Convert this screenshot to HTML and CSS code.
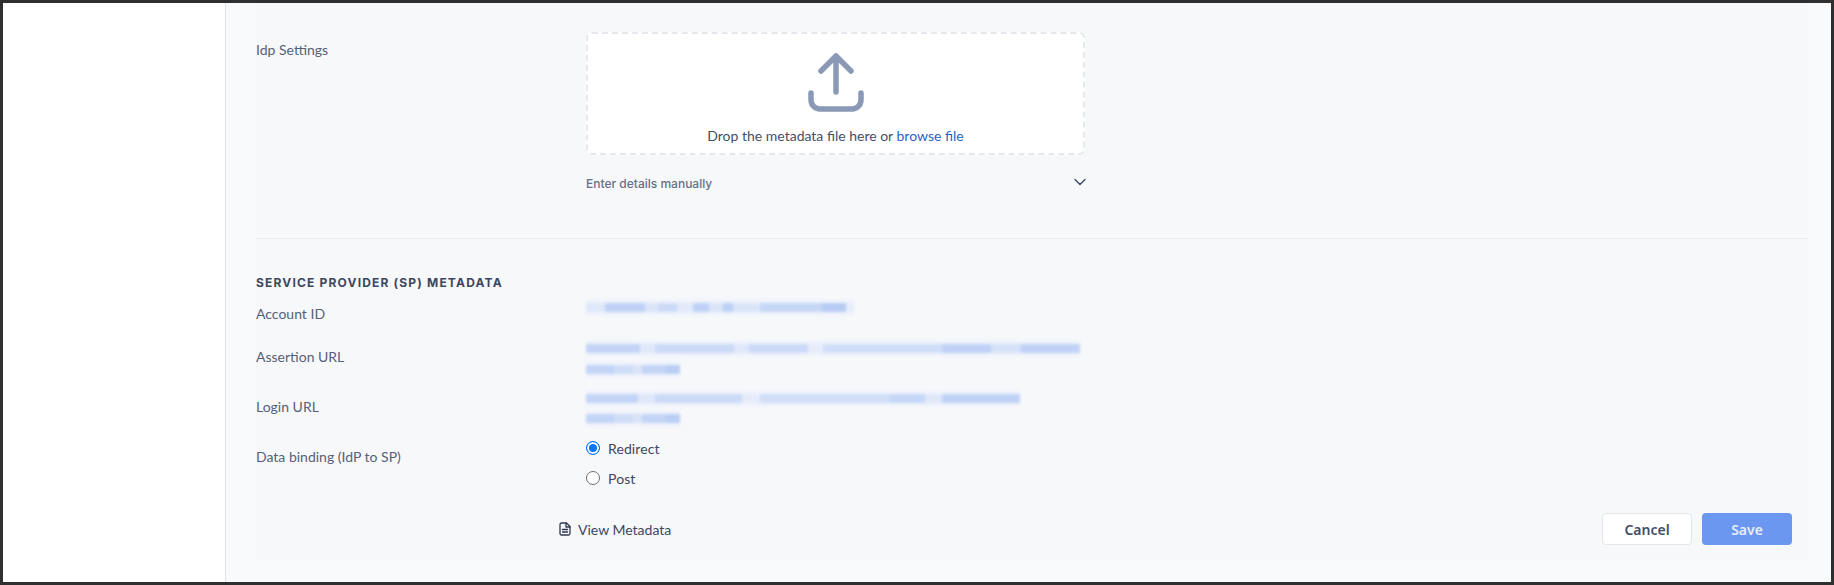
FILE: index.html
```html
<!DOCTYPE html>
<html lang="en">
<head>
<meta charset="utf-8">
<title>SAML settings</title>
<link rel="stylesheet" href="styles.css">
</head>
<body>
<div class="frame">
  <aside class="sidebar"></aside>
  <main class="main">
    <div class="card">
      <section class="idp">
        <div class="label idp-label">Idp Settings</div>
        <div class="idp-body">
          <div class="drop">
            <svg class="upload" viewBox="0 0 56 60" width="56" height="60" fill="none" stroke="#8a99b5" stroke-linecap="round" stroke-linejoin="round">
              <path stroke-width="5.500" d="M28 40V4M13 19 28 4 43 19"/>
              <path stroke-width="5.500" d="M3 41v7a9 9 0 0 0 9 9h32a9 9 0 0 0 9-9v-7"/>
            </svg>
            <p class="drop-text">Drop the metadata file here or <a class="link" href="#">browse file</a></p>
          </div>
          <div class="manual">
            <span>Enter details manually</span>
            <svg class="chev" viewBox="0 0 12 8" width="12" height="8" fill="none" stroke="#3d4760" stroke-width="1.400" stroke-linecap="round" stroke-linejoin="round"><path d="M1 1.500 6 6.500 11 1.500"/></svg>
          </div>
        </div>
      </section>
      <section class="sp">
        <h2 class="heading">SERVICE PROVIDER (SP) METADATA</h2>
        <div class="row row-account">
          <div class="label">Account ID</div>
          <div class="value"><div class="blur w-account m1"></div></div>
        </div>
        <div class="row row-assert">
          <div class="label">Assertion URL</div>
          <div class="value">
            <div class="blur w-assert m2"></div>
            <div class="blur w-short m3"></div>
          </div>
        </div>
        <div class="row row-login">
          <div class="label">Login URL</div>
          <div class="value">
            <div class="blur w-login m4"></div>
            <div class="blur w-short m3"></div>
          </div>
        </div>
        <div class="row row-binding">
          <div class="label">Data binding (IdP to SP)</div>
          <div class="radios">
            <label class="radio"><span class="dot on"></span>Redirect</label>
            <label class="radio"><span class="dot"></span>Post</label>
          </div>
        </div>
      </section>
      <footer class="foot">
        <a class="meta" href="#">
          <svg viewBox="0 0 12 14" width="12" height="14" fill="none" stroke="#2f3850" stroke-width="1.300" stroke-linejoin="round" stroke-linecap="round"><path d="M1 2.500A1.500 1.500 0 0 1 2.500 1H7.500L11 4.500V11.500A1.500 1.500 0 0 1 9.500 13H2.500A1.500 1.500 0 0 1 1 11.500Z"/><path d="M7 1V5H11M3.500 7.500H8.500M3.500 10H8.500"/></svg>
          View Metadata
        </a>
        <div class="actions">
          <button class="btn cancel" type="button">Cancel</button>
          <button class="btn save" type="button">Save</button>
        </div>
      </footer>
    </div>
  </main>
</div>
</body>
</html>
```
FILE: styles.css
```css
* { box-sizing: border-box; }
html, body { margin: 0; height: 100%; }
body { font-family: Lato, "Liberation Sans", sans-serif; font-size: 14px; color: #4f5a73; }

.frame {
  display: flex;
  width: 1834px;
  height: 585px;
  border: 3px solid #2f2f2f;
  overflow: hidden;
  background: #fff;
}
.sidebar { width: 223px; flex: none; background: #fff; border-right: 1px solid #dfe2e8; }
.main { flex: 1; background: #f9fafc; padding: 0 23px 22px 30px; }
.card { height: 100%; background: #f7f8fa; display: flex; flex-direction: column; }

.label { color: #566078; line-height: 18px; }

.idp { display: flex; height: 236px; border-bottom: 1px solid #eceef2; }
.idp-label { width: 330px; padding-top: 38px; }
.idp-body { width: 500px; padding-top: 29px; }
.drop {
  height: 123px;
  margin-right: 1px;
  background: #fff;
  border: 2px dashed #e6e8ed;
  border-radius: 6px;
  display: flex;
  flex-direction: column;
  align-items: center;
  padding-top: 18px;
}
.upload { display: block; }
.drop-text { margin: 15px 0 0; color: #454f67; line-height: 18px; }
.link { color: #2a64c5; text-decoration: none; }
.manual {
  display: flex;
  justify-content: space-between;
  align-items: center;
  margin-top: 20px;
  height: 16px;
  font-family: Inter, sans-serif;
  font-size: 12px;
  font-weight: 500;
  color: #64708a;
}
.chev { margin-top: -3px; }

.sp { padding-top: 36px; }
.heading {
  margin: 0;
  font-family: Inter, sans-serif;
  font-size: 12px;
  font-weight: 700;
  letter-spacing: 1.180px;
  line-height: 16px;
  color: #3d4760;
}
.row { display: flex; }
.row > .label { width: 330px; flex: none; }
.row-account { margin-top: 13px; height: 43px; }
.row-account .label { padding-top: 1px; }
.row-assert { height: 50px; }
.row-assert .label { padding-top: 1px; }
.row-login { height: 49px; }
.row-login .label { padding-top: 1px; }
.row-binding { margin-top: -6px; }
.row-binding .label { padding-top: 8px; }

.value { display: flex; flex-direction: column; gap: 4px; margin-top: -7px; }
.row-account .value { margin-top: -5px; }
.row-login .value { margin-top: -7px; gap: 3px; }

.blur {
  height: 17px;
  filter: blur(1.500px);
  background-image: var(--mosaic);
  background-repeat: no-repeat;
  background-position: left center;
  background-size: 100% 9px;
  background-color: #f0f3fb;
}
.w-account { width: 268px; }
.w-assert { width: 494px; }
.w-login { width: 434px; }
.w-short { width: 94px; }

.m1 { --mosaic: linear-gradient(90deg, #dfe8fa 0 7%, #bfd2f6 7% 22%, #dbe5f9 22% 27%, #ccdaf7 27% 34%, #e1e9fa 34% 40%, #bfd2f6 40% 46%, #dbe5f9 46% 51%, #bdd0f5 51% 55%, #dbe5f9 55% 65%, #c6d7f6 65% 88%, #b6ccf4 88% 97%, #e6ecfa 97%); }
.m2 { --mosaic: linear-gradient(90deg, #c3d4f6 0 11%, #dfe8fa 11% 14%, #cbdaf7 14% 30%, #dfe8fa 30% 33%, #cbdaf7 33% 45%, #e6ecfa 45% 48%, #d0def8 48% 72%, #bfd2f6 72% 82%, #d5e1f8 82% 88%, #bfd2f6 88% 100%); }
.m3 { --mosaic: linear-gradient(90deg, #c3d4f6 0 30%, #cfddf8 30% 50%, #dae4f9 50% 60%, #c3d4f6 60% 85%, #b8cef4 85% 100%); }
.m4 { --mosaic: linear-gradient(90deg, #c3d4f6 0 12%, #dfe8fa 12% 16%, #cbdaf7 16% 36%, #e6ecfa 36% 40%, #d0def8 40% 70%, #c5d6f6 70% 78%, #dfe8fa 78% 82%, #bfd2f6 82% 100%); }

.radios { display: flex; flex-direction: column; gap: 12px; margin-top: -1px; }
.radio { display: flex; align-items: center; gap: 8px; height: 18px; color: #3d4760; letter-spacing: 0.100px; }
.dot { width: 14px; height: 14px; border-radius: 50%; background: #fff; border: 1px solid #6f6f6f; flex: none; }
.dot.on { border: 1px solid #0b76f5; box-shadow: inset 0 0 0 2px #fff; background: #0b76f5; }

.foot { display: flex; align-items: center; justify-content: space-between; margin-top: 26px; padding: 0 16px 0 303px; }
.meta { display: flex; align-items: center; gap: 7px; color: #3d4760; text-decoration: none; }
.actions { display: flex; gap: 10px; }
.btn {
  width: 90px;
  height: 32px;
  border-radius: 4px;
  font-family: "Noto Sans", sans-serif;
  font-size: 14px;
  font-weight: 600;
  padding: 0;
}
.cancel { background: #fff; border: 1px solid #e2e5ea; color: #434d66; }
.save { background: #6c97f0; border: 0; color: #e6edfc; }
```
